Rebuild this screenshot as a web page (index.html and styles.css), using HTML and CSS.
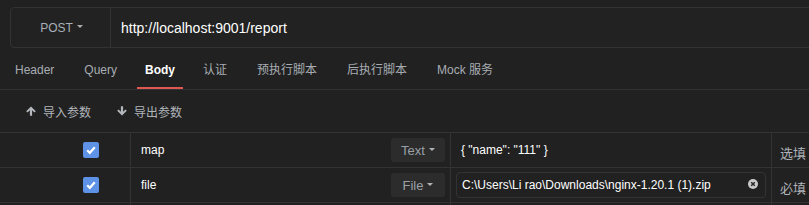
FILE: index.html
```html
<!DOCTYPE html>
<html>
<head>
<meta charset="utf-8">
<link rel="stylesheet" href="styles.css">
</head>
<body>
<div class="page">
  <div class="urlbar">
    <div class="method">POST<span class="caret"></span></div>
    <div class="url">http://localhost:9001/report</div>
  </div>
  <div class="tabs">
    <div class="tab">Header</div>
    <div class="tab">Query</div>
    <div class="tab active">Body</div>
    <div class="tab">认证</div>
    <div class="tab">预执行脚本</div>
    <div class="tab">后执行脚本</div>
    <div class="tab">Mock 服务</div>
  </div>
  <div class="actions">
    <div class="action">
      <svg class="arrow" viewBox="0 0 10 10"><path d="M5 0.5 L9.8 5.3 L8.4 6.6 L6.1 4.3 V9.8 H3.9 V4.3 L1.6 6.6 L0.2 5.3 Z" fill="#b4b8bd"/></svg>
      <span>导入参数</span>
    </div>
    <div class="action">
      <svg class="arrow" viewBox="0 0 10 10"><path d="M5 9.5 L9.8 4.7 L8.4 3.4 L6.1 5.7 V0.2 H3.9 V5.7 L1.6 3.4 L0.2 4.7 Z" fill="#b4b8bd"/></svg>
      <span>导出参数</span>
    </div>
  </div>
  <div class="table">
    <div class="row">
      <div class="cell c1"><span class="check"><svg viewBox="0 0 16 16"><path d="M4.2 8.3 L6.8 10.8 L11.8 5.2" fill="none" stroke="#fff" stroke-width="2.2"/></svg></span></div>
      <div class="cell c2"><span class="name">map</span><span class="select">Text<span class="caret"></span></span></div>
      <div class="cell c3"><span class="value">{ "name": "111" }</span></div>
      <div class="cell c4"><span class="req">选填</span></div>
    </div>
    <div class="row">
      <div class="cell c1"><span class="check"><svg viewBox="0 0 16 16"><path d="M4.2 8.3 L6.8 10.8 L11.8 5.2" fill="none" stroke="#fff" stroke-width="2.2"/></svg></span></div>
      <div class="cell c2"><span class="name">file</span><span class="select">File<span class="caret"></span></span></div>
      <div class="cell c3"><div class="fileinput"><span class="value">C:\Users\Li rao\Downloads\nginx-1.20.1 (1).zip</span><svg class="clear" viewBox="0 0 10 10"><circle cx="5" cy="5" r="5" fill="#c9c9c9"/><path d="M3.2 3.2 L6.8 6.8 M6.8 3.2 L3.2 6.8" stroke="#2a2a2a" stroke-width="1.5"/></svg></div></div>
      <div class="cell c4"><span class="req">必填</span></div>
    </div>
    <div class="row">
      <div class="cell c1"></div>
      <div class="cell c2"></div>
      <div class="cell c3"></div>
      <div class="cell c4"></div>
    </div>
  </div>
</div>
</body>
</html>
```
FILE: styles.css
```css
html, body {
  margin: 0;
  padding: 0;
  background: #212121;
  overflow: hidden;
}
.page {
  width: 809px;
  height: 205px;
  overflow: hidden;
  font-family: "Liberation Sans", Arial, "Noto Sans CJK SC", sans-serif;
  font-size: 12px;
  color: #a8adb3;
}
.urlbar {
  display: flex;
  margin: 7px -20px 0 10px;
  height: 41px;
  box-sizing: border-box;
  border: 1px solid #323232;
  border-radius: 4px;
  background: #222222;
}
.method {
  width: 100px;
  border-right: 1px solid #323232;
  display: flex;
  align-items: center;
  justify-content: center;
  padding-left: 2px;
  box-sizing: border-box;
  color: #a9b0b8;
  font-size: 12px;
}
.caret {
  display: inline-block;
  width: 0;
  height: 0;
  border-left: 3px solid transparent;
  border-right: 3px solid transparent;
  border-top: 3px solid #a9adb2;
  margin-left: 4px;
  position: relative;
  top: -1px;
}
.url {
  display: flex;
  align-items: center;
  padding-left: 10px;
  color: #ffffff;
  font-size: 14px;
}
.tabs {
  display: flex;
  height: 42px;
  box-sizing: border-box;
  border-bottom: 1px solid #333333;
}
.tab {
  margin: 0 5px;
  padding: 14px 10px 0;
  height: 41px;
  box-sizing: border-box;
  line-height: 16px;
  color: #a8adb3;
}
.tab.active {
  color: #ffffff;
  font-weight: bold;
  padding: 14px 8px 0;
  border-bottom: 2px solid #e0584f;
}
.actions {
  display: flex;
  align-items: center;
  height: 42px;
  padding-left: 26px;
  gap: 26px;
}
.action {
  display: flex;
  align-items: center;
  gap: 7px;
  color: #b0b4b9;
}
.arrow {
  width: 10px;
  height: 10px;
}
.table {
  border-top: 1px solid #333333;
}
.row {
  display: grid;
  grid-template-columns: 130px 320px 321px 60px;
  height: 34px;
  border-bottom: 1px solid #333333;
}
.cell {
  display: flex;
  align-items: center;
  box-sizing: border-box;
}
.c2, .c3, .c4 {
  border-left: 1px solid #333333;
}
.c1 {
  padding-left: 83px;
}
.check {
  width: 16px;
  height: 16px;
  background: #5d92e6;
  border-radius: 2px;
  display: flex;
}
.check svg {
  width: 16px;
  height: 16px;
}
.c2 {
  padding: 0 5px 0 10px;
  justify-content: space-between;
}
.name {
  color: #ffffff;
}
.select {
  width: 54px;
  height: 24px;
  background: #2c2c2c;
  border-radius: 3px;
  display: flex;
  align-items: center;
  justify-content: center;
  color: #9aa0a6;
  font-size: 13px;
}
.select .caret {
  border-top-color: #b0b4b8;
}
.c3 {
  padding: 0 5px 0 10px;
}
.value {
  color: #ffffff;
}
.fileinput {
  margin-left: -5px;
  width: 310px;
  height: 26px;
  box-sizing: border-box;
  border: 1px solid #333333;
  border-radius: 4px;
  display: flex;
  align-items: center;
  justify-content: space-between;
  padding: 0 7px 0 5px;
}
.clear {
  width: 10px;
  height: 10px;
  margin-top: -2px;
}
.c4 {
  padding: 5px 0 0 8px;
}
.req {
  font-size: 13px;
  color: #b0b4b9;
}
```
